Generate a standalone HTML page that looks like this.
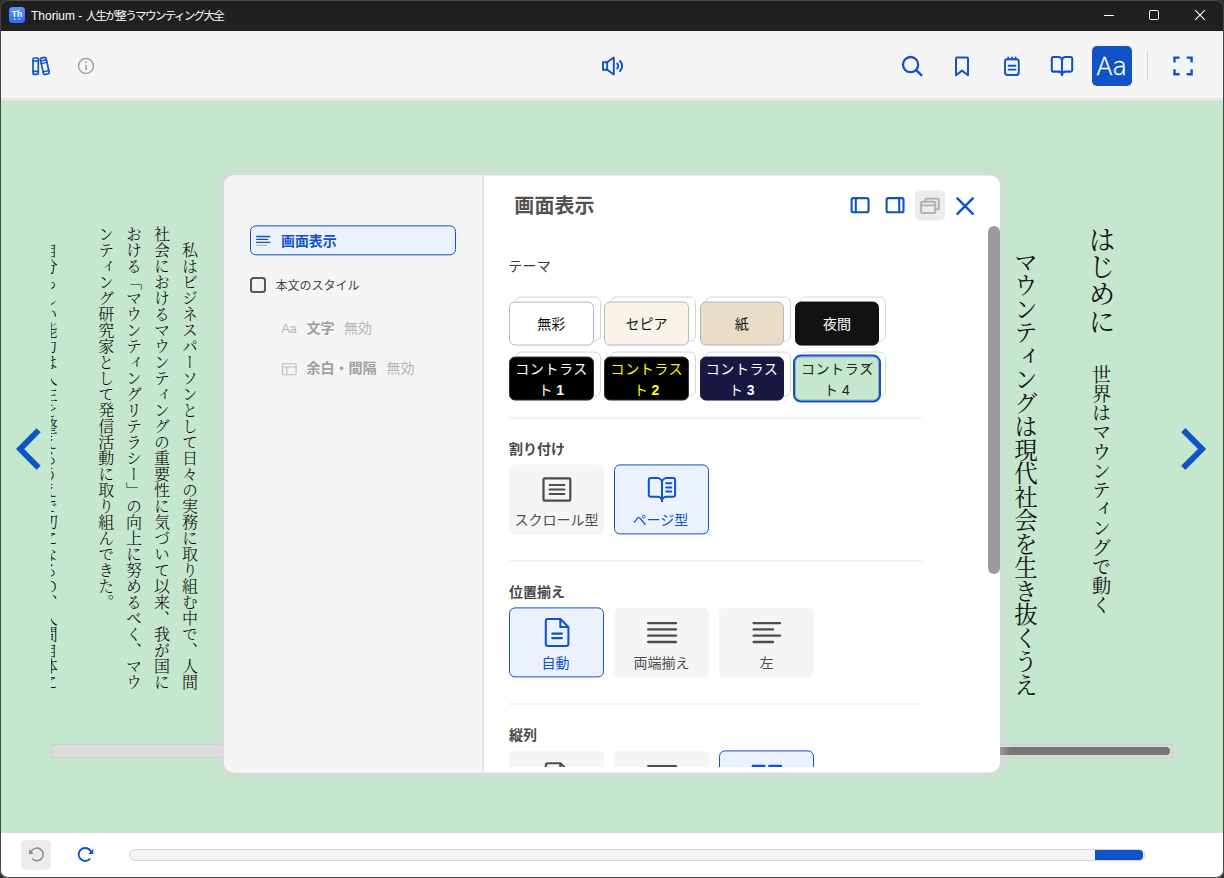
<!DOCTYPE html>
<html lang="ja">
<head>
<meta charset="utf-8">
<title>Thorium - 人生が整うマウンティング大全</title>
<style>
*{box-sizing:border-box;margin:0;padding:0}
html,body{width:1224px;height:878px;overflow:hidden;background:#303030}
body{position:relative;font-family:"Liberation Sans","Noto Sans CJK JP",sans-serif;color:#000}
div,span{position:absolute}
#win{left:0;top:0;width:1224px;height:878px;background:#454545;border-radius:8px;overflow:hidden}
#frame{left:0;top:0;width:1224px;height:878px;border-radius:8px;box-shadow:inset 0 0 0 1px #454545;z-index:100;pointer-events:none}
#titlebar{left:0;top:0;width:1224px;height:31px;background:#202020;color:#fff}
#titletext{left:31px;top:8px;font-size:12px;line-height:15px;white-space:nowrap}
#toolbar{left:0;top:31px;width:1224px;height:70px;background:#f5f5f5;border-bottom:3px solid #e6e6e6}
#content{left:0;top:101px;width:1224px;height:732px;background:#c5e7cd}
#bottombar{left:0;top:833px;width:1224px;height:45px;background:#fff}
svg{position:absolute;left:0;top:0;overflow:visible}
.vt{writing-mode:vertical-rl;font-family:"Liberation Serif","Noto Serif CJK JP","Noto Serif CJK SC",serif;color:#111;white-space:nowrap}
.vt.body{font-size:16px;line-height:16px;width:16px;font-weight:300;color:#000}

#dialog{left:224px;top:175px;width:776px;height:597px}
#dbg{left:0;top:0;width:776px;height:597px;transform:translateY(0.5px);border-radius:10px;background:#fff;overflow:hidden;box-shadow:0 0 8px 4px rgba(226,208,228,.46)}
#dbg i{position:absolute;display:block;top:0;height:597px}
#dleft{left:0;top:0;width:258px;height:597px}
#dright{left:260px;top:0;width:516px;height:592px;overflow:hidden}
.tab{transform:translateY(0.35px);left:26px;top:50px;width:206px;height:30px;border:1px solid #1053c8;border-radius:6px;background:#ecf2fd}
.tab span{left:30px;top:6.5px;font-size:13.9px;line-height:16px;font-weight:700;color:#1053c8;white-space:nowrap}
.t{white-space:nowrap}
.h4{font-size:14px;line-height:18px;font-weight:700;color:#484848;white-space:nowrap;left:25px}
.hr{left:25px;width:413px;height:2px;background:#f3f3f3}
.opt{transform:translateY(0.4px);width:95px;height:70px;border-radius:6px;background:#f5f5f5;color:#4d4d4d}
.opt.sel{background:#ecf2fd;border:1px solid #1053c8;color:#1053c8}
.opt span{left:0;width:100%;top:46.3px;text-align:center;font-size:14px;line-height:20px;white-space:nowrap}
.opt.sel span{left:-1px;top:45.3px}
.th{transform:translateY(-0.45px);width:84.5px;height:44px;border-radius:6px;border:1px solid #b4b7c2;font-size:14px;line-height:21px;text-align:center}
.gh{transform:translateY(-0.45px);width:85.5px;height:45px;border-radius:6px;border:1px solid #d3d5dc;background:#fff}
.th span{left:0;width:100%;text-align:center;white-space:nowrap}
</style>
</head>
<body>
<div id="win">

<!-- TITLEBAR -->
<div id="titlebar">
  <div id="titletext">Thorium - <span style="position:static;font-size:11.6px;letter-spacing:-1.72px">人生が整うマウンティング大全</span></div>
</div>

<!-- TOOLBAR -->
<div id="toolbar"></div>

<!-- CONTENT -->
<div id="content">
  <!-- book text (page coords offset by -101 in y) -->
  <div id="clipcol" style="left:50.5px;top:100px;width:30px;height:520px;overflow:hidden">
    <div class="vt body" style="left:-10.2px;top:41px">自分らしい能力は人生を整えるうえで切になるの、人間自体に</div>
  </div>
  <div class="vt body" style="left:180.4px;top:141px">私はビジネスパーソンとして日々の実務に取り組む中で、人間</div>
  <div class="vt body" style="left:152.4px;top:125px">社会におけるマウンティングの重要性に気づいて以来、我が国に</div>
  <div class="vt body" style="left:124.5px;top:125px">おける「マウンティングリテラシー」の向上に努めるべく、マウ</div>
  <div class="vt body" style="left:96.7px;top:125px">ンティング研究家として発信活動に取り組んできた。</div>
  <div class="vt" style="left:1085.5px;top:124.5px;font-size:27.2px;line-height:27.2px;width:27.2px">はじめに</div>
  <div class="vt" style="left:1089.8px;top:263.5px;font-size:19.2px;line-height:19.2px;width:19.2px">世界はマウンティングで動く</div>
  <div class="vt" style="left:1011.6px;top:149px;font-size:23.5px;line-height:23.5px;width:23.5px">マウンティングは現代社会を生き抜くうえ</div>
  <!-- horizontal scrollbar of content -->
  <div style="left:51px;top:643px;width:1122px;height:14px;background:#dcdcdc;box-shadow:inset 0 0 0 1px #cfcfcf"></div>
  <div style="left:980px;top:646px;width:190px;height:8px;border-radius:4px;background:#767676"></div>
</div>

<svg id="nav" width="1224" height="878" viewBox="0 0 1224 878" fill="none">
  <path d="M38.6 430.2 L20.1 449 L38.6 467.8" stroke="#1053c8" stroke-width="5.9"/>
  <path d="M1183.3 430.2 L1202 449 L1183.3 467.8" stroke="#1053c8" stroke-width="5.9"/>
</svg>
<!-- BOTTOM -->
<div id="bottombar">
  <div style="left:21px;top:7px;width:30px;height:30px;border-radius:5px;background:#ececec"></div>
  <div style="left:129px;top:16.2px;width:1015.5px;height:12px;border-radius:6px;background:#f5f5f5;border:1px solid #d6d6d6"></div>
  <div style="left:1095px;top:17px;width:48.300px;height:10.2px;border-radius:0 3.800px 3.800px 0;background:#1053c8"></div>
  <svg width="1224" height="45" viewBox="0 833 1224 45" fill="none" stroke-linecap="round" stroke-linejoin="round">
    <path d="M31.2 851.8 A6.3 6.3 0 1 1 32.6 859" stroke="#8a8a8a" stroke-width="1.500"/>
    <path d="M29.100 849 V854 H33.700 Z" fill="#8a8a8a"/>
    <path d="M91.100 851.800 A6.500 6.500 0 1 0 89.700 859.100" stroke="#1053c8" stroke-width="1.900"/>
    <path d="M93.300 848.800 V854.100 H88.300 Z" fill="#1053c8"/>
  </svg>
</div>

<!-- ICONS-TOP -->
<svg id="icons-top" width="1224" height="110" viewBox="0 0 1224 110" fill="none" stroke-linecap="round" stroke-linejoin="round">
  <!-- app icon -->
  <defs><linearGradient id="ag" x1="0" y1="0" x2="0" y2="1"><stop offset="0" stop-color="#5b93ff"/><stop offset="1" stop-color="#2f6af0"/></linearGradient></defs>
  <rect x="9" y="7" width="16" height="16" rx="3.5" fill="url(#ag)"/>
  <text x="17" y="17.4" font-family="Liberation Sans, sans-serif" font-weight="700" font-size="8.6" fill="#fff" text-anchor="middle" stroke="none">Th</text>
  <path d="M13.800 19 q0.900 1.200 1.800 0 M18.400 19 q0.900 1.200 1.800 0" stroke="#fff" stroke-width="0.800"/>
  <!-- window controls -->
  <path d="M1104 15.5 H1114" stroke="#fff" stroke-width="1" stroke-linecap="butt"/>
  <rect x="1149.5" y="10.5" width="9" height="9" rx="1" stroke="#fff" stroke-width="1"/>
  <path d="M1195.200 10.200 L1204.800 19.800 M1204.800 10.200 L1195.200 19.800" stroke="#fff" stroke-width="1.100" stroke-linecap="butt"/>
  <!-- library / books -->
  <g stroke="#1053c8" stroke-width="1.7">
    <rect x="33" y="58" width="5.3" height="16.4" rx="1.2"/>
    <path d="M33 61 h5.3 M33 71.400 h5.300"/>
    <g transform="rotate(-13 44.800 66)">
      <rect x="41.900" y="57.500" width="5.800" height="16.800" rx="1.200"/>
      <path d="M41.900 60.300 h5.800 M41.900 62.900 h5.800 M41.900 71.300 h5.800" stroke-width="1.400"/>
    </g>
  </g>
  <!-- info -->
  <circle cx="86" cy="66" r="7.500" stroke="#a4a4a8" stroke-width="1.600"/>
  <path d="M86 65 v5" stroke="#a4a4a8" stroke-width="1.700" stroke-linecap="butt"/>
  <circle cx="86" cy="62.300" r="1" fill="#a4a4a8"/>
  <!-- speaker -->
  <g stroke="#1053c8" stroke-width="1.9" stroke-linejoin="miter">
    <path d="M603 62.3 H607.2 V69.7 H603 Z"/>
    <path d="M607.2 62.3 L613.8 57.6 V74.4 L607.2 69.7" stroke-linejoin="round"/>
    <path d="M617.2 63.4 Q619.2 66 617.2 68.6" />
    <path d="M620 61 Q624.4 66 620 71" />
  </g>
  <!-- search -->
  <circle cx="910.6" cy="64.6" r="7.6" stroke="#1053c8" stroke-width="2.3"/>
  <path d="M916.2 70.2 L921.4 75.2" stroke="#1053c8" stroke-width="2.3"/>
  <!-- bookmark -->
  <path d="M956 58.6 a1 1 0 0 1 1 -1 h10 a1 1 0 0 1 1 1 V75.2 L962 70.6 L956 75.2 Z" stroke="#1053c8" stroke-width="2"/>
  <!-- notes -->
  <g stroke="#1053c8" stroke-width="1.9">
    <rect x="1005" y="59.2" width="13.8" height="15.8" rx="2.4"/>
    <path d="M1008.2 57.4 v2 M1011.9 57.4 v2 M1015.6 57.4 v2"/>
    <path d="M1008.6 65.8 h6.8 M1008.6 69.6 h6.8"/>
  </g>
  <!-- open book -->
  <g stroke="#1053c8" stroke-width="2.05">
    <path d="M1062 60.4 a3.5 3.5 0 0 0 -3.5 -3.5 H1053.4 a1.6 1.6 0 0 0 -1.6 1.6 V70 a1.6 1.6 0 0 0 1.6 1.6 H1058.5 a3.5 3.5 0 0 1 3.5 3.400"/>
    <path d="M1062 60.4 a3.5 3.5 0 0 1 3.5 -3.5 H1070.600 a1.6 1.6 0 0 1 1.6 1.6 V70 a1.6 1.6 0 0 1 -1.6 1.6 H1065.5 a3.5 3.5 0 0 0 -3.5 3.400"/>
    <path d="M1062 60.4 V75"/>
  </g>
  <!-- Aa button -->
  <rect x="1092" y="46" width="40" height="40" rx="5" fill="#1053c8"/>
  <text x="1111.300" y="75" font-family="DejaVu Sans, Liberation Sans, sans-serif" font-weight="200" font-size="24.200" fill="#fff" text-anchor="middle" stroke="#fff" stroke-width="0.450" letter-spacing="-0.600">Aa</text>
  <!-- separator -->
  <path d="M1147.5 51 V80.5" stroke="#d2d2d2" stroke-width="1" stroke-linecap="butt"/>
  <!-- fullscreen -->
  <path d="M1174.5 62.6 V57.6 H1179.6 M1186.6 57.6 H1191.6 V62.6 M1191.6 69.2 V74.2 H1186.6 M1179.600 74.2 H1174.5 V69.2" stroke="#1053c8" stroke-width="2.4" stroke-linecap="butt" stroke-linejoin="miter"/>
</svg>

<!-- DIALOG -->
<div id="dialog">
  <div id="dbg"><i style="left:0;width:258px;background:#f5f5f5"></i><i style="left:258px;width:2px;background:#e5e5e5"></i></div>
  <div id="dleft">
    <div class="tab"><span>画面表示</span></div>
    <div style="left:26px;top:102px;width:15.5px;height:15.5px;border:2px solid #565656;border-radius:3.5px"></div>
    <div class="t" style="left:51.5px;top:101.7px;font-size:12px;line-height:18px;color:#454545">本文のスタイル</div>
    <div class="t" style="left:57.5px;top:145px;font-size:12.5px;line-height:18px;color:#b4b4b4;letter-spacing:-0.2px">Aa</div>
    <div class="t" style="left:82.5px;top:143.4px;font-size:14px;line-height:20px;color:#9f9f9f;font-weight:700">文字</div>
    <div class="t" style="left:120px;top:143.4px;font-size:14px;line-height:20px;color:#b4b4b4">無効</div>
    <div class="t" style="left:82.5px;top:183.4px;font-size:14px;line-height:20px;color:#9f9f9f;font-weight:700">余白・間隔</div>
    <div class="t" style="left:162.5px;top:183.4px;font-size:14px;line-height:20px;color:#b4b4b4">無効</div>
  </div>
  <div id="dright">
    <div class="t" style="left:30.3px;top:17.5px;font-size:20px;line-height:26px;font-weight:700;color:#525252;letter-spacing:0.1px">画面表示</div>
    <div class="t" style="left:24.3px;top:82px;font-size:14px;line-height:18px;color:#3a3a3a;letter-spacing:0.2px">テーマ</div>
    <!-- themes (ghosts then buttons) -->
    <div class="gh" style="left:31px;top:121.5px"></div><div class="gh" style="left:126px;top:121.5px"></div><div class="gh" style="left:221px;top:121.5px"></div><div class="gh" style="left:316px;top:121.5px"></div>
    <div class="gh" style="left:31px;top:176.500px"></div><div class="gh" style="left:126px;top:176.5px"></div><div class="gh" style="left:221px;top:176.5px"></div><div class="gh" style="left:316px;top:176.5px"></div>
    <div class="th" style="left:25px;top:127px;background:#fff;color:#111"><span style="top:10.5px">無彩</span></div>
    <div class="th" style="left:120.3px;top:127px;background:#faf4e8;color:#111"><span style="top:10.5px">セピア</span></div>
    <div class="th" style="left:215.5px;top:127px;background:#e9ddc8;color:#111"><span style="top:10.5px">紙</span></div>
    <div class="th" style="left:310.7px;top:127px;background:#121212;color:#fff;border-color:#121212"><span style="top:10.5px">夜間</span></div>
    <div class="th" style="left:25px;top:182px;background:#000;color:#fff;border-color:#333"><span style="top:0.5px;letter-spacing:0.55px;left:0.3px">コントラス</span><span style="top:21.500px">ト<b style="font-family:'Liberation Sans',sans-serif"> 1</b></span></div>
    <div class="th" style="left:120.3px;top:182px;background:#000;color:#ff0;border-color:#333"><span style="top:0.5px;letter-spacing:0.55px;left:0.3px">コントラス</span><span style="top:21.500px">ト<b style="font-family:'Liberation Sans',sans-serif"> 2</b></span></div>
    <div class="th" style="left:215.5px;top:182px;background:#181842;color:#fff;border-color:#181842"><span style="top:0.5px;letter-spacing:0.55px;left:0.3px">コントラス</span><span style="top:21.500px">ト<b style="font-family:'Liberation Sans',sans-serif"> 3</b></span></div>
    <div class="th" style="left:310.7px;top:182px;background:#c5e7cd;color:#222;border-color:#9fb0a6;outline:2.3px solid #1053c8;outline-offset:0"><span style="top:0.5px;letter-spacing:0.55px;left:0.3px">コントラス</span><span style="top:21.500px">ト 4</span></div>
    <div class="hr" style="top:241.5px"></div>

    <div class="h4" style="top:264.5px">割り付け</div>
    <div class="opt" style="left:25px;top:289px"><span>スクロール型</span></div>
    <div class="opt sel" style="left:130px;top:289px"><span>ページ型</span></div>
    <div class="hr" style="top:385px"></div>

    <div class="h4" style="top:407.5px">位置揃え</div>
    <div class="opt sel" style="left:25px;top:432px"><span>自動</span></div>
    <div class="opt" style="left:130px;top:432px"><span>両端揃え</span></div>
    <div class="opt" style="left:235px;top:432px"><span>左</span></div>
    <div class="hr" style="top:528px"></div>

    <div class="h4" style="top:550.5px">縦列</div>
    <div class="opt" style="left:25px;top:575px"></div>
    <div class="opt" style="left:130px;top:575px"></div>
    <div class="opt sel" style="left:235px;top:575px"></div>
  </div>
  <!-- scrollbar -->
  <div style="left:764px;top:50.5px;width:12px;height:348px;border-radius:6px;background:#9b9b9f"></div>
  <svg id="dicons" style="overflow:hidden" width="776" height="597" viewBox="224 175 776 597" fill="none" stroke-linecap="round" stroke-linejoin="round">
    <!-- tab icon -->
    <g stroke="#1053c8" stroke-width="1.3" stroke-linecap="butt">
      <path d="M256.2 236.5 H270.3 M256.2 239.4 H268.2 M256.2 242.300 H270.3"/>
      <path d="M256.2 245.3 H266.8" opacity=".35"/>
    </g>
    <!-- layout icon (left panel) -->
    <g stroke="#bdbdbd" stroke-width="1.150">
      <rect x="282.500" y="363.700" width="13.600" height="11" rx="0.800"/>
      <path d="M282.500 367 H296.100 M286.800 367 V374.700"/>
    </g>
    <!-- header: dock left / dock right / detach / close -->
    <g stroke="#1053c8" stroke-width="2.1">
      <rect x="851.6" y="198.1" width="16.9" height="14.1" rx="1.8"/>
      <path d="M855.8 198.1 V212.2"/>
      <rect x="886.6" y="198.1" width="16.9" height="14.100" rx="1.8"/>
      <path d="M899.2 198.1 V212.2"/>
    </g>
    <rect x="915" y="190.5" width="30" height="30" rx="5" fill="#ececec"/>
    <g stroke="#b0b0b0" stroke-width="1.9">
      <path d="M925.4 201 V199.600 a1 1 0 0 1 1 -1 H937.8 a1 1 0 0 1 1 1 V208.4 a1 1 0 0 1 -1 1 H936"/>
      <rect x="921.1" y="201.8" width="14.2" height="11.2" rx="1"/>
      <path d="M921.1 205.400 H935.3"/>
    </g>
    <path d="M957.4 198.3 L972.8 213.8 M972.8 198.3 L957.4 213.8" stroke="#1053c8" stroke-width="2.4"/>
    <!-- check mark on selected theme -->
    <path d="M862.400 365.700 L865 367.900 L872.100 363.200" stroke="#2a2a2a" stroke-width="1" />
    <!-- scroll icon -->
    <g stroke="#4d4d4d" stroke-width="2.2">
      <rect x="543.5" y="478.3" width="26.8" height="22.3" rx="1.2"/>
      <path d="M549.6 485 H564.4 M549.6 489.5 H564.4 M549.6 494 H564.4" stroke-width="2"/>
    </g>
    <!-- page icon -->
    <g stroke="#1053c8" stroke-width="2">
      <path d="M662 482.6 a4.500 4.500 0 0 0 -4.500 -4.500 H650.800 a2 2 0 0 0 -2 2 V494.700 a2 2 0 0 0 2 2 H657.500 a4.500 4.500 0 0 1 4.500 4.200"/>
      <path d="M662 482.6 a4.500 4.500 0 0 1 4.500 -4.500 H673.100 a2 2 0 0 1 2 2 V494.700 a2 2 0 0 1 -2 2 H666.500 a4.500 4.500 0 0 0 -4.500 4.200"/>
      <path d="M662 482.6 V500.800"/>
      <path d="M666.200 483.300 H671.300 M666.200 487.400 H671.300 M666.200 491.400 H671.300"/>
    </g>
    <!-- auto (doc) icon -->
    <g stroke="#1053c8" stroke-width="2.05">
      <path d="M547.8 619 H560.400 L568.400 627 V644 a2 2 0 0 1 -2 2 H547.800 a2 2 0 0 1 -2 -2 V621 a2 2 0 0 1 2 -2 Z"/>
      <path d="M560.3 619.500 V627 H568"/>
      <path d="M552.2 633.600 H562 M552.2 638.100 H562"/>
    </g>
    <!-- justify icon -->
    <path d="M648.2 623.200 H676 M648.200 629.400 H676 M648.2 635.700 H676 M648.200 642 H676" stroke="#4d4d4d" stroke-width="2.300"/>
    <!-- left icon -->
    <path d="M753.600 623.200 H780 M753.600 629.400 H773 M753.600 635.700 H780 M753.600 642 H773" stroke="#4d4d4d" stroke-width="2.300"/>
    <!-- column row icons (cut off) -->
    <g stroke="#4d4d4d" stroke-width="2.05">
      <path d="M547.8 763.2 H560.4 L568.4 771.2 V788 H545.8 V765.2 a2 2 0 0 1 2 -2 Z"/>
      <path d="M560.3 763.700 V771.200 H568"/>
      <path d="M648.2 766 H676" stroke-width="2.2"/>
    </g>
    <path d="M752.800 766 H764.400 M769.300 766 H780.900" stroke="#1053c8" stroke-width="2.4"/>
    <rect x="484" y="767" width="504" height="5" fill="#fff"/>
  </svg>
</div>

</div>
<div id="frame"></div>
</body>
</html>
